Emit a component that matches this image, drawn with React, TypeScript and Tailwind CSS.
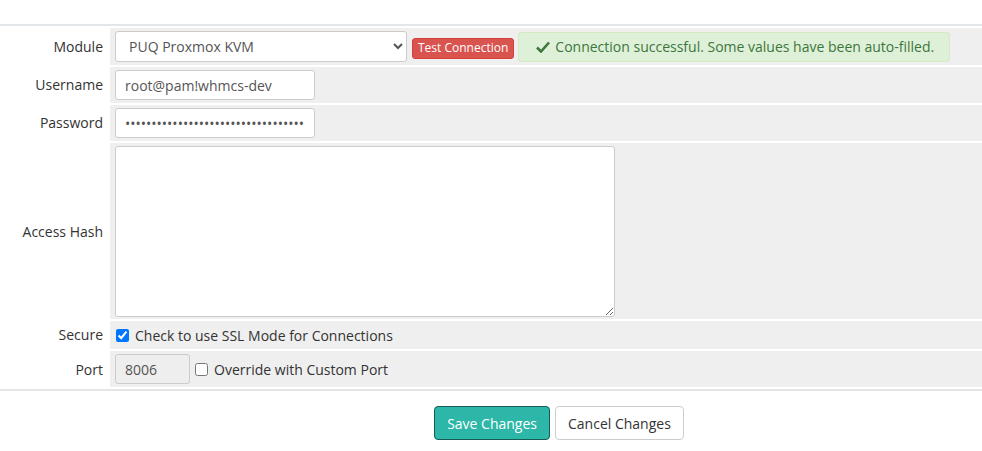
import React from "react"

const label = "w-[110px] shrink-0 bg-white flex items-center justify-end pr-[7px] text-[14px] text-[#333]"
const field = "flex-1 bg-[#efefef] flex items-center pl-[5px]"
const input =
  "h-[30px] border border-[#ccc] rounded-[3px] bg-white px-[9px] text-[14px] text-[#555] outline-none"

export default function App() {
  return (
    <div className="w-[982px] h-[451px] bg-white font-['Open_Sans',sans-serif]">
      <div className="pt-[24px]">
        <div className="border-t-2 border-b-2 border-[#e3e6e8] py-[2px] flex flex-col gap-[2px]">
          <div className="flex h-[37px]">
            <div className={label}>Module</div>
            <div className={field}>
              <select
                defaultValue="puq"
                className="h-[31px] w-[292px] border border-[#ccc] rounded-[3px] bg-white pl-[9px] text-[14px] text-[#555] outline-none"
              >
                <option value="puq">PUQ Proxmox KVM</option>
              </select>
              <button className="ml-[5px] mt-[3px] h-[21px] px-[5px] rounded-[3px] bg-[#d9534f] border border-[#d43f3a] text-white text-[12px] leading-none">
                Test Connection
              </button>
              <div className="ml-[4px] h-[30px] w-[432px] flex items-center pl-[17px] rounded-[3px] bg-[#dff0d8] border border-[#d6e9c6] text-[#3c763d] text-[14px]">
                <svg width="14" height="12" viewBox="0 0 14 12" className="mr-[5px]">
                  <path d="M1 6.5 L5 10.5 L13 1.5" fill="none" stroke="#3c763d" strokeWidth="2.6" />
                </svg>
                Connection successful. Some values have been auto-filled.
              </div>
            </div>
          </div>
          <div className="flex h-[36px]">
            <div className={label}>
              <span className="-mt-[2px]">Username</span>
            </div>
            <div className={field}>
              <input className={`${input} w-[200px]`} defaultValue="root@pam!whmcs-dev" />
            </div>
          </div>
          <div className="flex h-[36px]">
            <div className={label}>
              <span className="-mt-[2px]">Password</span>
            </div>
            <div className={field}>
              <input
                type="password"
                className={`${input} w-[200px]`}
                defaultValue="abcdefghijklmnopqrstuvwxyzabcdefghijklmnop"
              />
            </div>
          </div>
          <div className="flex h-[176px]">
            <div className={label}>Access Hash</div>
            <div className={field}>
              <textarea className="h-[171px] w-[500px] border border-[#ccc] rounded-[3px] bg-white outline-none" />
            </div>
          </div>
          <div className="flex h-[28px]">
            <div className={label}>
              <span className="-mt-[2px]">Secure</span>
            </div>
            <div className={`${field} gap-[6px] text-[14px] text-[#333]`}>
              <input type="checkbox" defaultChecked className="ml-[1px] w-[13px] h-[13px] accent-[#0075ff]" />
              <span>Check to use SSL Mode for Connections</span>
            </div>
          </div>
          <div className="flex h-[36px]">
            <div className={label}>Port</div>
            <div className={`${field} text-[14px] text-[#333]`}>
              <input
                disabled
                className="h-[30px] w-[75px] border border-[#ccc] rounded-[3px] bg-[#eee] px-[9px] text-[14px] text-[#555]"
                defaultValue="8006"
              />
              <input type="checkbox" className="ml-[5px] w-[13px] h-[13px]" />
              <span className="ml-[6px]">Override with Custom Port</span>
            </div>
          </div>
        </div>
        <div className="flex justify-center gap-[5px] pt-[15px] pl-[136px]">
          <button className="h-[34px] px-[12px] rounded-[4px] bg-[#2cb7a8] border border-[#155c55] text-white text-[14px]">
            Save Changes
          </button>
          <button className="h-[34px] px-[12px] rounded-[4px] bg-white border border-[#ccc] text-[#333] text-[14px]">
            Cancel Changes
          </button>
        </div>
      </div>
    </div>
  )
}
